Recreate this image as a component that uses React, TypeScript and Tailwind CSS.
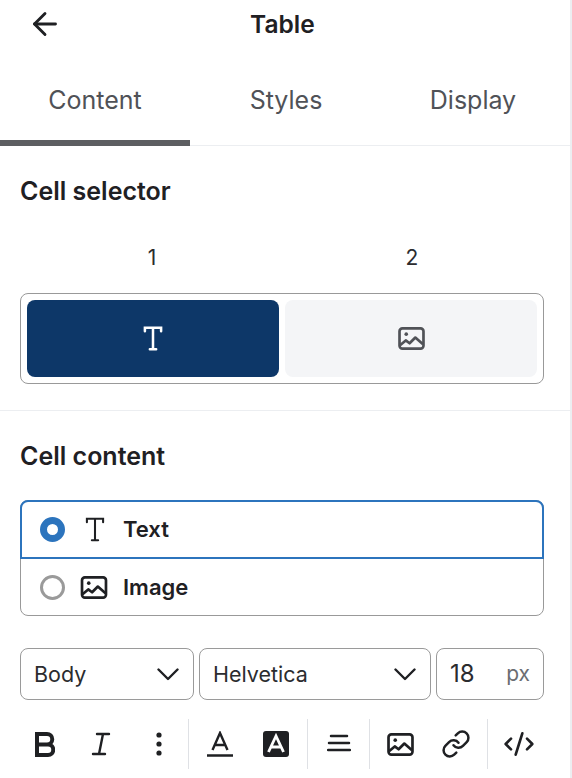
import React from 'react';
import { ArrowLeft, CodeXml, Link } from 'lucide-react';

const SerifT = ({ className, weight = 2.8 }: { className?: string; weight?: number }) => (
  <svg viewBox="0 0 24 30" fill="none" stroke="currentColor" strokeWidth={weight} strokeLinecap="round" className={className}>
    <path d="M3 7V3h18v4M12 3v24M8.5 27h7" />
  </svg>
);

const PictureIcon = ({ className }: { className?: string }) => (
  <svg viewBox="0 0 28 24" fill="none" stroke="currentColor" strokeWidth="2.8" strokeLinejoin="round" className={className}>
    <rect x="1.5" y="1.5" width="25" height="21" rx="3" />
    <circle cx="8.5" cy="7.5" r="1.9" fill="currentColor" stroke="none" />
    <path d="M2 19l6-5 4 3 6-6 8 7" />
  </svg>
);

const Chevron = () => (
  <svg viewBox="0 0 22 13" fill="none" stroke="currentColor" strokeWidth="2.4" strokeLinecap="round" strokeLinejoin="round" className="h-[13px] w-[22px] text-[#1f2023]">
    <path d="M1.5 1.5 11 11l9.5-9.5" />
  </svg>
);

const BoldIcon = () => (
  <svg viewBox="0 0 20 25" fill="none" stroke="currentColor" strokeWidth="4" className="h-[25px] w-[20px]">
    <path d="M2 2h10a5 5 0 0 1 0 10.5H2zM2 12.5h11a5.2 5.2 0 0 1 0 10.5H2z" />
  </svg>
);

const ItalicIcon = () => (
  <svg viewBox="0 0 20 24" fill="none" stroke="currentColor" strokeWidth="2.4" strokeLinecap="round" className="h-[24px] w-[20px]">
    <path d="M6 2h12M2 22h12M12 2 8 22" />
  </svg>
);

const DotsIcon = () => (
  <svg viewBox="0 0 6 24" fill="currentColor" className="h-[24px] w-[6px]">
    <circle cx="3" cy="3" r="2.6" />
    <circle cx="3" cy="12" r="2.6" />
    <circle cx="3" cy="21" r="2.6" />
  </svg>
);

const UnderlineA = () => (
  <svg viewBox="0 0 26 26" fill="none" stroke="currentColor" strokeWidth="2.4" className="h-[26px] w-[26px]">
    <path d="M5.5 19 13 2l7.5 17M8 14h10M0 24.5h26" />
  </svg>
);

const FilledA = () => (
  <svg viewBox="0 0 26 26" className="h-[26px] w-[26px]">
    <rect width="26" height="26" rx="3" fill="#1f2023" />
    <path d="M5.5 21 13 5l7.5 16M8 16h10" fill="none" stroke="#fff" strokeWidth="2.8" />
  </svg>
);

const AlignIcon = () => (
  <svg viewBox="0 0 24 20" fill="none" stroke="currentColor" strokeWidth="2.5" strokeLinecap="round" className="mb-[2px] h-5 w-6">
    <path d="M4 3h16M2 10h20M1 17h22" />
  </svg>
);

const Divider = () => <div className="h-[50px] w-px bg-[#dfe1e5]" />;

const Select = ({ label, width }: { label: string; width: string }) => (
  <div className={`flex h-[52px] items-center justify-between rounded-lg border border-[#9a9a9a] pl-[13px] pr-[14px] ${width}`}>
    <span className="text-[21.5px] text-[#2b2c2f]">{label}</span>
    <Chevron />
  </div>
);

export default function App() {
  return (
    <div className="h-[778px] w-[572px] overflow-hidden border-r-2 border-[#eceef1] bg-white font-['Inter',sans-serif] text-[#1f2023]">
      <header className="flex h-[48px] items-center">
        <div className="flex w-[250px] pl-[27px]">
          <ArrowLeft className="h-[36px] w-[36px]" strokeWidth={1.9} />
        </div>
        <h1 className="text-[24.5px] font-semibold">Table</h1>
      </header>

      <nav className="flex h-[98px] border-b border-[#eceef1] text-[25px] text-[#505257]">
        <div className="-mb-px flex w-[190px] items-center justify-center rounded-t-[4px] border-b-[6px] border-[#5d5e61] pt-[13px]">
          Content
        </div>
        <div className="flex w-[192px] items-center justify-center pt-[9px]">Styles</div>
        <div className="flex w-[182px] items-center justify-center pt-[9px]">Display</div>
      </nav>

      <section className="border-b border-[#eceef1] pb-[26px] pl-[20px] pr-[26px] pt-[30px]">
        <h2 className="text-[25px] leading-[30px] font-semibold">Cell selector</h2>
        <div className="mt-[37px] grid grid-cols-2 text-center text-[21px] leading-[30px] text-[#2b2c2f]">
          <span className="pl-[2px]">1</span>
          <span className="pr-[2px]">2</span>
        </div>
        <div className="mt-[20px] grid h-[91px] grid-cols-2 gap-[6px] rounded-lg border border-[#999999] p-[6px]">
          <div className="flex items-center justify-center rounded-lg bg-[#0d3768] text-white">
            <SerifT className="h-[27px] w-[22px]" />
          </div>
          <div className="flex items-center justify-center rounded-lg bg-[#f4f5f7] text-[#505257]">
            <PictureIcon className="h-[23px] w-[27px]" />
          </div>
        </div>
      </section>

      <section className="pl-[20px] pr-[26px] pt-[30px]">
        <h2 className="text-[25px] leading-[30px] font-semibold">Cell content</h2>
        <div className="mt-[29px] flex h-[116px] flex-col rounded-lg border border-[#999999]">
          <div className="-m-px flex h-[59px] items-center rounded-t-lg border-2 border-[#2c74bd] pl-[18px]">
            <span className="h-[25px] w-[25px] rounded-full border-[7px] border-[#2c74bd]" />
            <SerifT className="ml-[18px] h-[27px] w-[24px]" weight={2.3} />
            <span className="ml-[16px] text-[22px] font-semibold">Text</span>
          </div>
          <div className="flex flex-1 items-center pl-[19px] pt-[1px]">
            <span className="h-[25px] w-[25px] rounded-full border-[3px] border-[#9a9a9a]" />
            <PictureIcon className="ml-[15px] h-[23px] w-[28px]" />
            <span className="ml-[15px] text-[22px] font-semibold">Image</span>
          </div>
        </div>

        <div className="mt-[32px] flex gap-[5px]">
          <Select label="Body" width="w-[174px]" />
          <Select label="Helvetica" width="w-[232px]" />
          <div className="flex h-[52px] w-[108px] items-center justify-between rounded-lg border border-[#9a9a9a] pl-[13px] pr-[13px]">
            <span className="text-[24px] text-[#2b2c2f]">18</span>
            <span className="text-[21px] text-[#6b6d72]">px</span>
          </div>
        </div>

        <div className="mt-[19px] flex h-[50px] items-center">
          <div className="flex w-[168px] items-center">
            <div className="ml-[15px]"><BoldIcon /></div>
            <div className="ml-[36px]"><ItalicIcon /></div>
            <div className="ml-[45px]"><DotsIcon /></div>
          </div>
          <Divider />
          <div className="flex w-[118px] items-center">
            <div className="ml-[18px]"><UnderlineA /></div>
            <div className="ml-[30px]"><FilledA /></div>
          </div>
          <Divider />
          <div className="flex w-[61px] items-center justify-center"><AlignIcon /></div>
          <Divider />
          <div className="flex w-[117px] items-center">
            <PictureIcon className="ml-[17px] h-[23px] w-[27px]" />
            <Link className="ml-[27px] h-[30px] w-[30px]" strokeWidth={2} />
          </div>
          <Divider />
          <CodeXml className="ml-[15px] h-[32px] w-[32px]" strokeWidth={2} />
        </div>
      </section>
    </div>
  );
}
